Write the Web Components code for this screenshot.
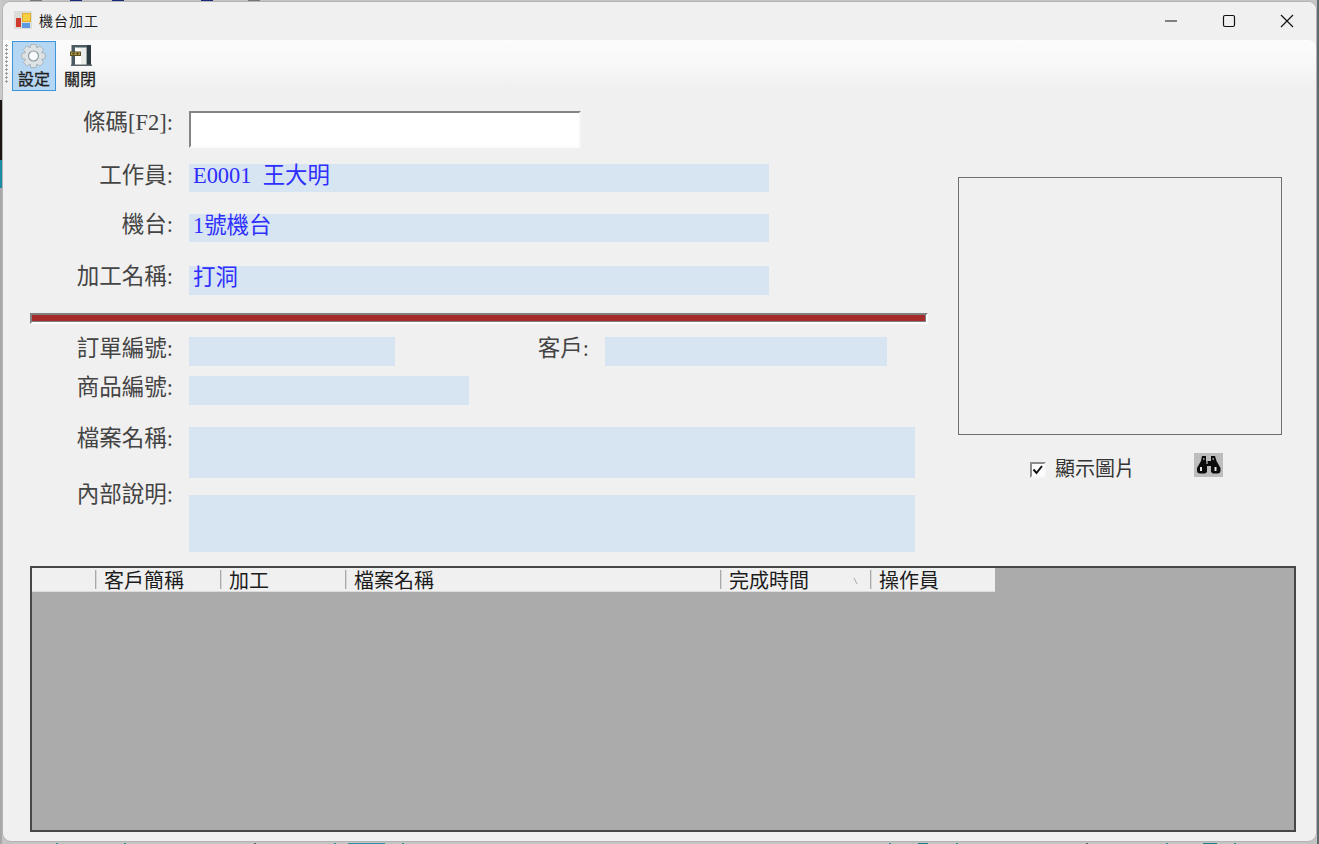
<!DOCTYPE html>
<html lang="zh-Hant">
<head>
<meta charset="utf-8">
<title>機台加工</title>
<style>
  html, body { margin: 0; height: 100%; overflow: hidden; }
  body {
    box-sizing: border-box;
    height: 844px;
    padding: 1px 2px 2px 2px;
    font-family: "Liberation Serif", "Noto Sans CJK TC", serif;
    background:
      /* bits of the desktop that show past the window edge */
      linear-gradient(90deg, transparent 30px, #777 30px 42px, transparent 42px 70px, #1a2a7a 70px 82px, transparent 82px 112px, #1a2a7a 112px 124px, transparent 124px 201px, #1a2a7a 201px 213px, transparent 213px 248px, #777 248px 260px, transparent 260px) left top / 100% 1px no-repeat,
      linear-gradient(90deg, transparent 56px, #2f8ea0 56px 58px, transparent 58px 124px, #2f8ea0 124px 126px, transparent 126px 254px, #666 254px 256px, transparent 256px 334px, #2f8ea0 334px 336px, transparent 336px 348px, #2f8ea0 348px 385px, transparent 385px 402px, #2f8ea0 402px 404px, transparent 404px 889px, #2f8ea0 889px 891px, transparent 891px 918px, #1d7f86 918px 928px, transparent 928px 956px, #2f8ea0 956px 958px, transparent 958px 1086px, #666 1086px 1088px, transparent 1088px 1166px, #2f8ea0 1166px 1168px, transparent 1168px 1203px, #1d7f86 1203px 1217px, transparent 1217px 1234px, #2f8ea0 1234px 1236px, transparent 1236px) left bottom / 100% 1px no-repeat,
      linear-gradient(#c9c9c9 0 100px, #1d1513 100px 160px, #1b8aa5 160px 188px, #a8a8a8 188px) left top / 2px 100% no-repeat,
      linear-gradient(#5f6a6e 0 100%) right top / 2px 100% no-repeat,
      #c4c4c4;
  }
</style>
</head>
<body>
<app-window>
  <title-bar caption="機台加工"></title-bar>
  <tool-bar>
    <tool-button label="設定" active>
      <gear-icon></gear-icon>
    </tool-button>
    <tool-button label="關閉">
      <svg width="26" height="26" viewBox="0 0 26 26">
        <path d="M4.500 1H24v21H4.500z" fill="#4a5b63"/>
        <path d="M8 3.500h11.500V21H8z" fill="#eceeec"/>
        <path d="M8 3.500l6 2.500v15H8z" fill="#fff"/>
        <path d="M20 1h4v21h-4z" fill="#2d3a40"/>
        <path d="M4 20.500h21V22H4z" fill="#5d6468"/>
        <path d="M3 7.500h11v4.500H3z" fill="#5b5124"/>
        <path d="M4 8.500h9v2.500H4z" fill="#b39c45"/>
        <path d="M5.500 9h2v1.500h-2zM9.500 9h2v1.500h-2z" fill="#3c3618"/>
      </svg>
    </tool-button>
  </tool-bar>
  <form-area>
    <form-row label="條碼[F2]:" style="margin-top:19px">
      <bar-input></bar-input>
    </form-row>
    <form-row label="工作員:" style="margin-top:16px">
      <field-box w="580" h="28">E0001&nbsp; 王大明</field-box>
    </form-row>
    <form-row label="機台:" field-top="1" style="margin-top:21px">
      <field-box w="580" h="28">1號機台</field-box>
    </form-row>
    <form-row label="加工名稱:" field-top="1" style="margin-top:23px">
      <field-box w="580" h="29">打洞</field-box>
    </form-row>
    <red-divider style="margin-top:18px"></red-divider>
    <form-row label="訂單編號:" style="margin-top:13px">
      <field-box w="206" h="29"></field-box>
      <form-label style="width:194px">客戶:</form-label>
      <field-box w="282" h="29" style="margin-left:16px"></field-box>
    </form-row>
    <form-row label="商品編號:" style="margin-top:10px">
      <field-box w="280" h="29"></field-box>
    </form-row>
    <form-row label="檔案名稱:" style="margin-top:22px">
      <field-box w="726" h="51"></field-box>
    </form-row>
    <form-row label="內部說明:" field-top="12" style="margin-top:5px">
      <field-box w="726" h="57"></field-box>
    </form-row>
    <picture-panel slot="side"></picture-panel>
    <data-grid slot="bottom"></data-grid>
  </form-area>
</app-window>

<script>
class AppWindow extends HTMLElement {
  constructor() {
    super();
    this.attachShadow({ mode: "open" }).innerHTML = `
      <style>
        :host {
          display: block;
          box-sizing: border-box;
          width: 1315px;
          height: 841px;
          background: #f0f0f0;
          border: 1px solid #b4b4b4;
          border-radius: 9px;
          overflow: hidden;
        }
      </style>
      <slot></slot>`;
  }
}

class TitleBar extends HTMLElement {
  constructor() {
    super();
    this.attachShadow({ mode: "open" }).innerHTML = `
      <style>
        :host {
          display: flex;
          align-items: center;
          height: 38px;
          font: 14px "Noto Sans CJK TC", sans-serif;
          color: #1a1a1a;
          background: #f0f0f0;
        }
        .icon { margin: 0 7px 3px 11px; flex: none; }
        .cap { flex: 1; letter-spacing: 1px; margin-bottom: 3px; }
        .btn { width: 58px; height: 38px; display: flex; align-items: center; justify-content: center; padding-bottom: 1px; box-sizing: border-box; }
      </style>
      <svg class="icon" width="18" height="18" viewBox="0 0 18 18">
        <rect width="18" height="18" fill="#dcdcd8"/>
        <rect x="8.500" y="2.500" width="8" height="8" fill="#f6cf45" stroke="#e2ae2a"/>
        <rect x="2" y="7" width="5" height="9" fill="#cf3a2c"/>
        <rect x="8" y="12" width="8" height="5" fill="#5d9be0"/>
      </svg>
      <span class="cap"></span>
      <div class="btn"><svg width="14" height="14" viewBox="0 0 14 14"><path d="M1 7h12" stroke="#111" stroke-width="1.200"/></svg></div>
      <div class="btn"><svg width="14" height="14" viewBox="0 0 14 14"><rect x="1.500" y="1.500" width="11" height="11" rx="1.500" fill="none" stroke="#111" stroke-width="1.200"/></svg></div>
      <div class="btn"><svg width="14" height="14" viewBox="0 0 14 14"><path d="M1 1l12 12M13 1L1 13" stroke="#111" stroke-width="1.200"/></svg></div>`;
    this.shadowRoot.querySelector(".cap").textContent = this.getAttribute("caption");
  }
}

class ToolBar extends HTMLElement {
  constructor() {
    super();
    this.attachShadow({ mode: "open" }).innerHTML = `
      <style>
        :host {
          display: flex;
          align-items: flex-start;
          height: 52px;
          box-sizing: border-box;
          padding-top: 1px;
          background: linear-gradient(#fcfcfc, #f8f8f8 45%, #efefef);
          border-radius: 0 8px 0 0;
        }
        .grip {
          width: 3px;
          height: 40px;
          margin: 3px 4px 0 2px;
          background: radial-gradient(circle at 1.500px 1.500px, #a0a0a0 1.200px, transparent 1.400px) 0 0 / 3px 4px;
        }
      </style>
      <div class="grip"></div>
      <slot></slot>`;
  }
}

class ToolButton extends HTMLElement {
  constructor() {
    super();
    this.attachShadow({ mode: "open" }).innerHTML = `
      <style>
        :host {
          display: flex;
          flex-direction: column;
          align-items: center;
          box-sizing: border-box;
          width: 44px;
          height: 50px;
          padding-top: 2px;
          margin-right: 2px;
          border: 1px solid transparent;
          font: 16px/16px "Noto Sans CJK TC", sans-serif;
          color: #222;
          -webkit-text-stroke: 0.3px #222;
        }
        :host([active]) { background: #b6d7f4; border-color: #3d96dc; }
        ::slotted(svg) { display: block; }
        .lab { white-space: nowrap; }
      </style>
      <slot></slot>
      <span class="lab"></span>`;
    this.shadowRoot.querySelector(".lab").textContent = this.getAttribute("label");
  }
}

// eight toothed cog, points worked out here rather than typed
class GearIcon extends HTMLElement {
  constructor() {
    super();
    let d = "";
    const teeth = 8, cx = 12.5, cy = 12;
    for (let i = 0; i < teeth; i++) {
      const a = (i / teeth) * Math.PI * 2;
      const step = Math.PI * 2 / teeth;
      const pts = [[8.8, -0.5], [12, -0.27], [12, 0.27], [8.8, 0.5]];
      pts.forEach(([r, off], j) => {
        const x = cx + r * Math.cos(a + off * step);
        const y = cy + r * Math.sin(a + off * step);
        d += (i === 0 && j === 0 ? "M" : "L") + x.toFixed(2) + " " + y.toFixed(2);
      });
    }
    this.attachShadow({ mode: "open" }).innerHTML = `
      <style>:host { display: block; width: 26px; height: 26px; } svg { display: block; }</style>
      <svg width="26" height="26" viewBox="0 0 26 26">
        <path d="${d}Z" fill="#dde2e5" stroke="#a9b3b9" stroke-width="1"/>
        <circle cx="${cx}" cy="${cy}" r="5" fill="#f9fbfc" stroke="#8f9ca4" stroke-width="1.200"/>
      </svg>`;
  }
}

// left column flows in the default slot, picture on the right, grid below
class FormArea extends HTMLElement {
  constructor() {
    super();
    this.attachShadow({ mode: "open" }).innerHTML = `
      <style>
        :host { display: block; padding-left: 27px; }
        .top { display: flex; height: 474px; }
        .left { width: 898px; }
        .side { margin-left: 30px; padding-top: 85px; }
      </style>
      <div class="top">
        <div class="left"><slot></slot></div>
        <div class="side"><slot name="side"></slot></div>
      </div>
      <slot name="bottom"></slot>`;
  }
}

class FormLabel extends HTMLElement {
  constructor() {
    super();
    this.attachShadow({ mode: "open" }).innerHTML = `
      <style>
        :host {
          display: block;
          flex: none;
          text-align: right;
          font: 22.500px/24px "Liberation Serif", "Noto Sans CJK TC", serif;
          color: #444;
          white-space: nowrap;
        }
      </style>
      <slot></slot>`;
  }
}

class FormRow extends HTMLElement {
  constructor() {
    super();
    this.attachShadow({ mode: "open" }).innerHTML = `
      <style>
        :host { display: block; }
        .row { display: flex; align-items: flex-start; }
        form-label { width: 143px; margin-right: 16px; }
        .fields { display: flex; align-items: flex-start; }
      </style>
      <div class="row">
        <form-label></form-label>
        <div class="fields"><slot></slot></div>
      </div>`;
    this.shadowRoot.querySelector("form-label").textContent = this.getAttribute("label");
    this.shadowRoot.querySelector(".fields").style.marginTop = (this.getAttribute("field-top") || 0) + "px";
  }
}

class FieldBox extends HTMLElement {
  constructor() {
    super();
    this.attachShadow({ mode: "open" }).innerHTML = `
      <style>
        :host {
          display: block;
          flex: none;
          box-sizing: border-box;
          padding-left: 4px;
          background: #d7e4f2;
          font: 22.400px/24px "Liberation Serif", "Noto Sans CJK TC", serif;
          color: #2f2fff;
          white-space: nowrap;
        }
      </style>
      <slot></slot>`;
    this.style.width = this.getAttribute("w") + "px";
    this.style.height = this.getAttribute("h") + "px";
  }
}

class BarInput extends HTMLElement {
  constructor() {
    super();
    this.attachShadow({ mode: "open" }).innerHTML = `
      <style>
        :host { display: block; width: 392px; height: 37px; }
        input {
          display: block;
          box-sizing: border-box;
          width: 100%;
          height: 100%;
          margin: 0;
          background: #fff;
          border: 2px solid;
          border-color: #858585 #f6f6f6 #fbfbfb #858585;
          outline: none;
        }
      </style>
      <input type="text">`;
  }
}

class RedDivider extends HTMLElement {
  constructor() {
    super();
    this.attachShadow({ mode: "open" }).innerHTML = `
      <style>
        :host {
          display: block;
          box-sizing: border-box;
          width: 898px;
          height: 11px;
          background: #a52a2a;
          border: 2px solid;
          border-color: #808080 #fbfbfb #fbfbfb #808080;
          box-shadow: inset -1px -1px 0 #808080;
        }
      </style>`;
  }
}

class PicturePanel extends HTMLElement {
  constructor() {
    super();
    this.attachShadow({ mode: "open" }).innerHTML = `
      <style>
        :host { display: block; width: 324px; }
        .pic { box-sizing: border-box; height: 258px; border: 1px solid #6e6e6e; }
        .opts { display: flex; align-items: flex-start; height: 40px; padding-left: 72px; }
        .chk {
          box-sizing: border-box;
          width: 16px;
          height: 16px;
          margin-top: 27px;
          background: #fdfdfd;
          border: 2px solid;
          border-color: #8c8c8c #f6f6f6 #f6f6f6 #8c8c8c;
        }
        .chk svg { display: block; }
        .txt {
          margin: 21px 0 0 9px;
          width: 139px;
          font: 20px/24px "Noto Sans CJK TC", sans-serif;
          color: #333;
          white-space: nowrap;
        }
        .glass { margin-top: 18px; background: #bdbdbd; display: block; }
      </style>
      <div class="pic"></div>
      <div class="opts">
        <div class="chk"><svg width="12" height="12" viewBox="0 0 12 12"><path d="M1.500 5.500l3 3.500 5.500-7" fill="none" stroke="#111" stroke-width="2"/></svg></div>
        <span class="txt">顯示圖片</span>
        <svg class="glass" width="29" height="24" viewBox="0 0 29 24">
          <path d="M8 3h4v5h5V3h4l1.500 5 4 7v2.500a3 3 0 0 1-3 3h-4a2.500 2.500 0 0 1-2.500-3V13h-4v4.500a2.500 2.500 0 0 1-2.500 3H6a3 3 0 0 1-3-3V15l4-7z" fill="#0c0c0c"/>
          <path d="M6 14h2v4H6zM20.500 14h2v4h-2zM12.500 8h1v3h-1z" fill="#e4e4e4"/>
          <path d="M9 5h1.500v2H9zM18.500 5H20v2h-1.500z" fill="#8a8a8a"/>
        </svg>
      </div>`;
  }
}

class DataGrid extends HTMLElement {
  constructor() {
    super();
    const cols = [
      ["", 63], ["客戶簡稱", 125], ["加工", 125],
      ["檔案名稱", 375], ["完成時間", 150, true], ["操作員", 125]
    ];
    const heads = cols.map(([text, w, sorted], i) => `
      <div class="col${i ? " sep" : ""}" style="width:${w}px">${text}${sorted
        ? '<svg class="sort" width="7" height="8" viewBox="0 0 7 8"><path d="M2 1l3 6" stroke="#a8a8a8" stroke-width="1"/></svg>' : ""}</div>`).join("");
    this.attachShadow({ mode: "open" }).innerHTML = `
      <style>
        :host {
          display: block;
          box-sizing: border-box;
          width: 1266px;
          height: 266px;
          background: #ababab;
          border: 2px solid #474747;
        }
        .head {
          display: flex;
          width: fit-content;
          height: 24px;
          box-sizing: border-box;
          background: #f0f0f0;
          border-bottom: 1px solid #dcdcdc;
          font: 20px/23px "Noto Sans CJK TC", sans-serif;
          color: #1c1c1c;
        }
        .col { position: relative; box-sizing: border-box; padding-left: 9px; white-space: nowrap; }
        .sep::before { content: ""; position: absolute; left: 0; top: 2px; bottom: 2px; width: 2px; background: linear-gradient(90deg, #a9a9a9 50%, #d8d8d8 50%); }
        .sort { position: absolute; right: 11px; top: 9px; }
      </style>
      <div class="head">${heads}</div>`;
  }
}

customElements.define("app-window", AppWindow);
customElements.define("title-bar", TitleBar);
customElements.define("tool-bar", ToolBar);
customElements.define("tool-button", ToolButton);
customElements.define("gear-icon", GearIcon);
customElements.define("form-area", FormArea);
customElements.define("form-label", FormLabel);
customElements.define("form-row", FormRow);
customElements.define("field-box", FieldBox);
customElements.define("bar-input", BarInput);
customElements.define("red-divider", RedDivider);
customElements.define("picture-panel", PicturePanel);
customElements.define("data-grid", DataGrid);
</script>
</body>
</html>
